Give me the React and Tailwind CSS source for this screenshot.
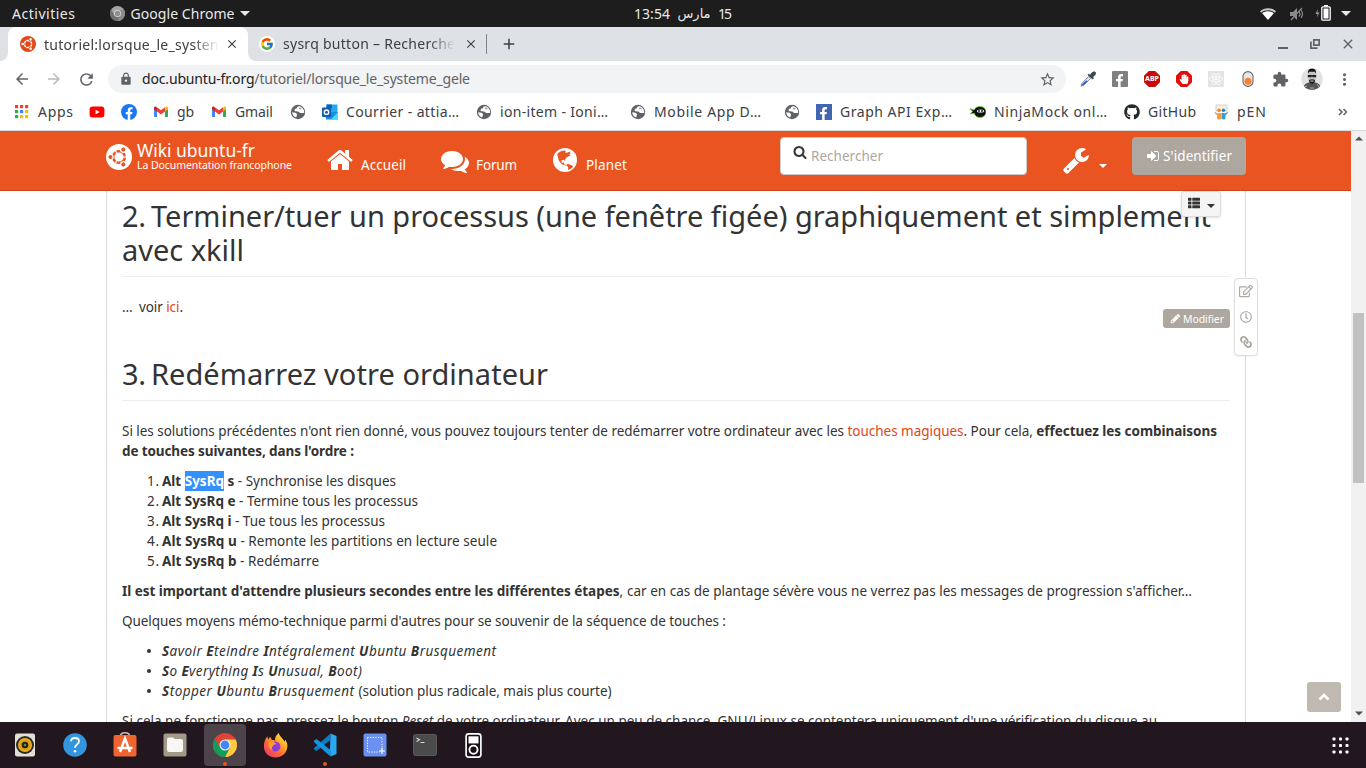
import React, { useLayoutEffect, useRef } from "react";
import { FaFacebookF, FaGithub, FaThList, FaRegClock, FaRegEdit, FaLink, FaReact, FaHandPaper } from "react-icons/fa";
import { MdArrowBack, MdArrowForward, MdRefresh, MdLock, MdStarBorder, MdExtension, MdMoreVert, MdAdd, MdClose } from "react-icons/md";
import { FcGoogle } from "react-icons/fc";

/* Spreads a single line of text over exactly `w` pixels through letter spacing. */
function Fit({ w, className = "", children }) {
  const ref = useRef(null);
  useLayoutEffect(() => {
    const el = ref.current;
    el.style.letterSpacing = "0px";
    const natural = el.getBoundingClientRect().width;
    const count = el.textContent.length;
    el.style.letterSpacing = `${(w - natural) / Math.max(1, count - 1)}px`;
  }, [w]);
  return (
    <span ref={ref} className={`inline-block shrink-0 whitespace-nowrap ${className}`}>
      {children}
    </span>
  );
}

function Glyph({ d, className }) {
  return (
    <svg viewBox="0 0 1792 1792" className={`shrink-0 fill-current ${className}`}>
      <path d={d} />
    </svg>
  );
}

const HOME = "M1472 992v480q0 26-19 45t-45 19h-384v-384h-256v384h-384q-26 0-45-19t-19-45v-480q0-1 .5-3t.5-3l575-474 575 474q1 2 1 6zm223-69l-62 74q-8 9-21 11h-3q-13 0-21-7l-692-577-692 577q-12 8-24 7-13-2-21-11l-62-74q-8-10-7-23.5t11-21.5l719-599q32-26 76-26t76 26l244 204v-195q0-14 9-23t23-9h192q14 0 23 9t9 23v408l219 182q10 8 11 21.5t-7 23.5z";
const COMMENTS = "M1408 768q0 139-94 257t-256.5 186.5-353.5 68.5q-86 0-176-16-124 88-278 128-36 9-86 16h-3q-11 0-20.5-8t-11.5-21q-1-3-1-6.5t.5-6.5 2-6l2.5-5 3.5-5.5 4-5 4.5-5 4-4.5q5-6 23-25t26-29.5 22.5-29 25-38.5 20.5-44q-124-72-195-177t-71-224q0-139 94-257t256.5-186.5 353.5-68.5 353.5 68.5 256.5 186.5 94 257zm384 256q0 120-71 224.5t-195 176.5q10 24 20.5 44t25 38.5 22.5 29 26 29.5 23 25q1 1 4 4.5t4.5 5 4 5 3.5 5.5l2.5 5 2 6 .5 6.5-1 6.5q-3 14-13 22t-22 7q-50-7-86-16-154-40-278-128-90 16-176 16-271 0-472-132 58 4 88 4 161 0 309-45t264-129q125-92 192-212t67-254q0-77-23-152 129 71 204 178t75 230z";
const SIGNIN = "M1312 896q0 26-19 45l-544 544q-19 19-45 19t-45-19-19-45v-288h-448q-26 0-45-19t-19-45v-384q0-26 19-45t45-19h448v-288q0-26 19-45t45-19 45 19l544 544q19 19 19 45zm352-352v704q0 119-84.5 203.5t-203.5 84.500h-320q-13 0-22.500-9.500t-9.500-22.500q0-4-1-20t-.5-26.500 3-23.500 10-19.500 20.500-6.500h320q66 0 113-47t47-113v-704q0-66-47-113t-113-47h-312l-11.500-1-11.500-3-8-5.500-7-9-2-13.500q0-4-1-20t-.5-26.500 3-23.500 10-19.500 20.500-6.500h320q119 0 203.500 84.500t84.500 203.500z";
const SEARCH = "M1216 832q0-185-131.5-316.5t-316.5-131.5-316.5 131.5-131.5 316.5 131.5 316.5 316.5 131.5 316.5-131.5 131.5-316.5zm512 832q0 52-38 90t-90 38q-54 0-90-38l-343-342q-179 124-399 124-143 0-273.5-55.5t-225-150-150-225-55.5-273.5 55.5-273.5 150-225 225-150 273.5-55.5 273.5 55.5 225 150 150 225 55.5 273.5q0 220-124 399l343 343q37 37 37 90z";
const WRENCH = "M448 1472q0-26-19-45t-45-19-45 19-19 45 19 45 45 19 45-19 19-45zm644-420l-682 682q-37 37-90 37-52 0-91-37l-106-108q-38-36-38-90 0-53 38-91l681-681q39 98 114.5 173.5t173.5 114.5zm634-435q0 39-23 106-47 134-164.5 217.5t-258.5 83.5q-185 0-316.5-131.5t-131.5-316.5 131.5-316.5 316.5-131.5q58 0 121.5 16.5t107.5 46.5q16 11 16 28t-16 28l-293 169v224l193 107q5-3 79-48.5t135.5-81 70.5-35.5q15 0 23.5 10t8.5 25z";
const PENCIL = "M491 1536l91-91-235-235-91 91v107h128v128h107zm523-928q0-22-22-22-10 0-17 7l-542 542q-7 7-7 17 0 22 22 22 10 0 17-7l542-542q7-7 7-17zm-54-192l416 416-832 832h-416v-416zm683 96q0 53-37 90l-166 166-416-416 166-165q36-38 90-38 53 0 91 38l235 234q37 39 37 91z";

function Caret({ className = "" }) {
  return (
    <svg viewBox="0 0 10 5" className={`shrink-0 fill-current ${className}`}>
      <path d="M0 0h10L5 5z" />
    </svg>
  );
}

function UbuntuLogo({ disc, mark, className }) {
  return (
    <svg viewBox="-12 -12 24 24" className={`shrink-0 ${className}`}>
      <circle r="12" fill={disc} />
      <circle r="5.4" fill="none" stroke={mark} strokeWidth="2.3" />
      {[0, 120, 240].map((a) => (
        <g key={a} transform={`rotate(${a})`}>
          <circle cx="-7.6" r="2.7" fill={disc} />
          <circle cx="-7.9" r="1.9" fill={mark} />
          <path d="M3 0h6" stroke={disc} strokeWidth="1.1" />
        </g>
      ))}
    </svg>
  );
}

function ChromeLogo({ mono = false, className }) {
  const [r, y, g, b] = mono ? ["#a5a5a5", "#8c8c8c", "#6f6f6f", "#8f8f8f"] : ["#db4437", "#ffcd40", "#0f9d58", "#4285f4"];
  return (
    <svg viewBox="0 0 48 48" className={`shrink-0 ${className}`}>
      <circle cx="24" cy="24" r="24" fill={r} />
      <path d="M24 13h21.3A24 24 0 0 1 24 48l9.5-18.5z" fill={y} />
      <path d="M3.2 12A24 24 0 0 0 24 48l9.5-18.5L24 35l-9.5-5.5z" fill={g} />
      <circle cx="24" cy="24" r="11" fill={mono ? "#e0e0e0" : "#f1f1f1"} />
      <circle cx="24" cy="24" r="8.8" fill={b} />
    </svg>
  );
}

function GmailLogo() {
  return (
    <svg viewBox="0 0 16 16" className="size-4">
      <path d="M1 4v8.3c0 .4.3.7.7.7H4V7z" fill="#4285f4" />
      <path d="M15 4v8.3c0 .4-.3.7-.7.7H12V7z" fill="#34a853" />
      <path d="M12 4v3.5l3-2.3V4c0-1.4-1.4-1.9-2.3-1.2z" fill="#fbbc04" />
      <path d="M1 4v1.2l3 2.3V4l-.7-1.2C2.4 2.1 1 2.6 1 4z" fill="#c5221f" />
      <path d="M4 7.5V3.300l4 3 4-3v4.200l-4 3z" fill="#ea4335" />
    </svg>
  );
}

function Globe() {
  return (
    <svg viewBox="0 0 16 16" className="size-4 shrink-0">
      <circle cx="8" cy="8" r="7.200" fill="#5f6368" />
      <path d="M9.800 2.200C8 2 6.800 2.800 7 4.200c-1.800.2-3 1.300-2.300 2.600.8 1.100 2.500.4 4 .9 1 .3.6 1.200 1.800 1.400 1 .1 1.600-.3 2.800-.1l1-.2C14.300 6 13 3.300 9.800 2.200z" fill="#fff" />
      <path d="M2.200 8.200c2.300.2 4.600.6 4.900 2.200.1 1-.8 1-.6 2 .1.700-.3 1-.9.9C3.700 12.400 2.300 10.700 2.200 8.200z" fill="#fff" />
      <path d="M9 3.700h2.500v1.600H9z" fill="#5f6368" opacity=".6" />
    </svg>
  );
}

function PlanetIcon({ className }) {
  return (
    <svg viewBox="0 0 24 24" className={`shrink-0 ${className}`}>
      <circle cx="12" cy="12" r="12" fill="#fff" />
      <path d="M4.200 6.200C6 4 8 2.800 10.500 2.400l2.500.6-1 1.500 2.400.3 1.600-1.300 1.800 1.700-1.600 1.200 1.400.8-3 1.500-2.400 2.300-.3 1.800-1.500-1-2 .8.300 2.200 1.600.2.600-.8.500 2.200 2 .9-1 .3L8.500 16 5.800 12.500 5 9z" fill="#e95420" />
      <path d="M13 16.800l2.300-.8 3.200 1.300 1.500 1.200c-1.300 1.700-3 2.900-5 3.400l.3-2.500z" fill="#e95420" />
    </svg>
  );
}

const bookmarks = [
  {
    label: "Apps", w: 35, box: "w-[35px]",
    icon: (
      <svg viewBox="0 0 16 16" className="size-4">
        {["#ea4335", "#ea4335", "#ea4335", "#34a853", "#4285f4", "#fbbc04", "#34a853", "#fbbc04", "#fbbc04"].map((c, i) => (
          <rect key={i} x={1 + (i % 3) * 5} y={1 + Math.floor(i / 3) * 5} width="3.2" height="3.2" fill={c} />
        ))}
      </svg>
    ),
  },
  {
    icon: (
      <svg viewBox="0 0 16 16" className="size-4">
        <rect x=".6" y="2.6" width="14.8" height="11" rx="3" fill="#f00" />
        <path d="M6.5 5.7v4.8L10.6 8.1z" fill="#fff" />
      </svg>
    ),
  },
  {
    icon: (
      <svg viewBox="0 0 24 24" className="size-4">
        <circle cx="12" cy="12" r="12" fill="#1877f2" />
        <path d="M16.7 15.5l.5-3.5h-3.3V9.800c0-.9.5-1.900 1.900-1.900h1.500V5s-1.400-.2-2.700-.2c-2.700 0-4.500 1.700-4.500 4.700V12h-3v3.500h3v8.400h3.800v-8.400z" fill="#fff" />
      </svg>
    ),
  },
  { label: "gb", w: 17, box: "w-[18px]", icon: <GmailLogo /> },
  { label: "Gmail", w: 38, box: "w-[39px]", icon: <GmailLogo /> },
  { icon: <Globe /> },
  {
    label: "Courrier - attia…", w: 113, box: "w-[114px]",
    icon: (
      <svg viewBox="0 0 16 16" className="size-4">
        <path d="M4.500.5h11v8h-11z" fill="#28a8ea" />
        <path d="M4.500.5H10v4H4.500z" fill="#0364b8" />
        <path d="M3 8h13v7.500H4z" fill="#1490df" />
        <path d="M16 8v7.500H9z" fill="#50d9ff" />
        <rect y="3.500" width="9" height="9.500" rx=".8" fill="#0f5fae" />
        <circle cx="4.500" cy="8.200" r="2.200" fill="none" stroke="#fff" strokeWidth="1.400" />
      </svg>
    ),
  },
  { label: "ion-item - Ioni…", w: 108, box: "w-[114px]", icon: <Globe /> },
  { label: "Mobile App D…", w: 107, box: "w-[114px]", icon: <Globe /> },
  { icon: <Globe /> },
  {
    label: "Graph API Exp…", w: 112, box: "w-[114px]",
    icon: (
      <span className="flex size-4 items-end justify-end bg-[#4267b2] pr-[2px]">
        <FaFacebookF className="size-[13px] text-white" />
      </span>
    ),
  },
  {
    label: "NinjaMock onl…", w: 113, box: "w-[114px]",
    icon: (
      <svg viewBox="0 0 16 16" className="size-4">
        <path d="M0 4.500l4 1.500C5 3.500 7.500 2.500 10 2.500c3.500 0 6 2.300 6 5.500s-2.500 5.500-6 5.500c-3 0-5.200-1.700-5.800-4.200L0 10l2.500-2.600z" fill="#111" stroke="#5fdc1e" strokeWidth=".8" />
        <ellipse cx="10.500" cy="7" rx="3.600" ry="1.600" fill="#fff" />
        <circle cx="9" cy="7" r=".9" fill="#111" />
        <circle cx="12" cy="7" r=".9" fill="#111" />
      </svg>
    ),
  },
  { label: "GitHub", w: 48, box: "w-[49px]", icon: <FaGithub className="size-4 text-[#24292e]" /> },
  {
    label: "pEN", w: 29, box: "w-[30px]",
    icon: (
      <svg viewBox="0 0 16 16" className="size-4">
        <rect x="3" y="1" width="11" height="6" fill="#fbf0e0" stroke="#b9b9b9" strokeWidth=".6" />
        <circle cx="6" cy="6.200" r="1.700" fill="#f5821f" />
        <circle cx="10.500" cy="6.200" r="1.700" fill="#1c87c9" />
        <path d="M1.500 7.500c2 2.500 4 1.500 6.500 1.500v6c-2 .8-4 .8-4-1V11C2.500 10.500 1.500 9 1.500 7.500z" fill="#f59a3f" />
        <path d="M15 7.500c-2 2.500-4 1.500-6.500 1.500v6c2 .8 4 .8 4-1V11c1.500-.5 2.500-2 2.500-3.500z" fill="#3a9ad6" />
      </svg>
    ),
  },
];

function TopBar() {
  return (
    <div className="flex h-[27px] shrink-0 items-center bg-[#1d1d1d] pl-3 text-[14px] text-[#e8e8e8]">
      <div className="flex w-[622px] items-center">
        <Fit w={63}>Activities</Fit>
        <ChromeLogo mono className="ml-[34px] size-[15px]" />
        <Fit w={104} className="ml-[6px]">Google Chrome</Fit>
        <Caret className="ml-[5px] h-[5px] w-[10px]" />
      </div>
      <div className="flex flex-1 items-center gap-[7px]">
        <Fit w={36}>13:54</Fit>
        <span className="w-[34px] text-center font-['DejaVu_Sans',sans-serif] text-[13px] whitespace-nowrap">مارس</span>
        <Fit w={14}>15</Fit>
      </div>
      <div className="flex items-center pr-[15px]">
        <svg viewBox="0 0 16 12" className="mr-px h-3 w-4">
          <path d="M0 3.300C4.500-.9 11.500-.9 16 3.300L14.800 4.700C11 1.500 5 1.500 1.200 4.700z" fill="#c9c9c9" />
          <path d="M2.200 5.200C5.500 2.700 10.500 2.700 13.800 5.200L8 12z" fill="#fff" />
        </svg>
        <svg viewBox="0 0 16 14" className="ml-[12px] h-[14px] w-4">
          <path d="M1 5h3l4-4v12L4 9H1z" fill="#8a8a8a" />
          <path d="M10 4.500q2 2.500 0 5M12 3q3 4 0 8M2 13L13 1" fill="none" stroke="#8a8a8a" strokeWidth="1.200" />
        </svg>
        <svg viewBox="0 0 16 16" className="ml-[10px] size-4 -translate-y-px">
          <path d="M3 4L.5 9h2L2 12.500 4.500 7.500h-2z" fill="#999" />
          <path d="M9 0h4v1.500H9z" fill="#fff" />
          <rect x="6.800" y="1.800" width="8.400" height="13.400" rx="1" fill="none" stroke="#fff" strokeWidth="1.300" />
          <rect x="8.500" y="3.500" width="5" height="10" fill="#fff" />
        </svg>
        <Caret className="ml-[10px] h-[5px] w-[10px]" />
      </div>
    </div>
  );
}

function TabStrip() {
  return (
    <div className="flex h-[34px] shrink-0 bg-[#dee1e6] text-[14px] text-[#3c4043]">
      <div className="flex w-2 items-end bg-white">
        <div className="h-full w-2 rounded-br-lg bg-[#dee1e6]" />
      </div>
      <div className="flex w-[240px] items-center bg-[#dee1e6]">
        <div className="flex h-full w-full items-center rounded-t-lg bg-white pl-3">
          <UbuntuLogo disc="#e04a1b" mark="#fff" className="size-4" />
          <div className="ml-2 w-[175px] overflow-hidden [mask-image:linear-gradient(to_right,black_85%,transparent)]">
            <Fit w={179}>tutoriel:lorsque_le_system</Fit>
          </div>
          <MdClose className="ml-[6px] size-[14px]" />
        </div>
      </div>
      <div className="bg-white">
        <div className="h-full w-2 rounded-bl-lg bg-[#dee1e6]" />
      </div>
      <div className="flex items-center pl-[3px]">
        <span className="flex size-4 items-center justify-center rounded-full bg-white">
          <FcGoogle className="size-[14px]" />
        </span>
        <div className="ml-2 w-[172px] overflow-hidden [mask-image:linear-gradient(to_right,black_85%,transparent)]">
          <Fit w={172} className="-translate-y-px">sysrq button – Recherche</Fit>
        </div>
        <MdClose className="ml-[9px] size-[14px]" />
        <div className="ml-2 h-5 w-px bg-[#808387]" />
        <MdAdd className="ml-[13px] size-[18px]" />
      </div>
      <div className="ml-auto flex items-center pr-[10px] text-[#5f6368]">
        <div className="mt-[7px] h-[2px] w-[10px] bg-[#5f6368]" />
        <svg viewBox="0 0 10 10" className="ml-[22px] size-[10px] fill-none stroke-current" strokeWidth="1.700">
          <path d="M3.800.9h5.300v5.300H3.800zM.9 2.500v6.600h6.600" />
        </svg>
        <MdClose className="ml-[20px] size-[16px]" />
      </div>
    </div>
  );
}

function Toolbar() {
  return (
    <div className="flex h-[36px] shrink-0 items-center bg-white pl-[13px] text-[#5f6368]">
      <MdArrowBack className="size-[18px] shrink-0" />
      <MdArrowForward className="ml-[14px] size-[18px] shrink-0 text-[#b9bbbe]" />
      <MdRefresh className="ml-[14px] size-[19px] shrink-0" />
      <div className="ml-[12px] flex h-7 w-[958px] shrink-0 items-center rounded-full bg-[#f1f3f4] pl-[11px] text-[14px]">
        <MdLock className="size-[14px] shrink-0" />
        <Fit w={328} className="ml-[9px] -translate-y-px">
          <span className="text-[#202124]">doc.ubuntu-fr.org</span>/tutoriel/lorsque_le_systeme_gele
        </Fit>
        <MdStarBorder className="mr-[10px] ml-auto size-[17px]" />
      </div>
      <div className="ml-[14px] flex items-center gap-4">
        <svg viewBox="0 0 16 16" className="size-4">
          <path d="M8.500 5.500l2 2L3.500 14.500 1 15.200 1.700 12.700z" fill="#dfe6fb" stroke="#777" strokeWidth=".8" />
          <path d="M6 9.500l2 .5-4.500 4.300-1.800.5.500-1.900z" fill="#2a62f0" />
          <path d="M7.500 4l1.200-1.200 1.300 1C11.500 1.500 13.500-.3 15.300 1s-.2 3.500-2.300 5l1 1.300L12.700 8.500z" fill="#3f464d" />
        </svg>
        <span className="flex size-4 items-end justify-end rounded-[1px] bg-[#808080] pr-[2px]">
          <FaFacebookF className="size-[13px] text-white" />
        </span>
        <span className="flex size-4 items-center justify-center bg-[#c70a0a] text-[7px] font-bold text-white [clip-path:polygon(30%_0,70%_0,100%_30%,100%_70%,70%_100%,30%_100%,0_70%,0_30%)]">ABP</span>
        <span className="flex size-4 items-center justify-center bg-[#e40d0d] [clip-path:polygon(30%_0,70%_0,100%_30%,100%_70%,70%_100%,30%_100%,0_70%,0_30%)]">
          <FaHandPaper className="size-[10px] text-white" />
        </span>
        <span className="flex size-4 items-center justify-center bg-[#e4e4e4]">
          <FaReact className="size-[14px] text-white" />
        </span>
        <svg viewBox="0 0 16 16" className="size-4">
          <rect x="3" y=".6" width="10" height="14.800" rx="5" fill="#e8e8e8" stroke="#666" strokeWidth="1.100" />
          <circle cx="8" cy="10.300" r="3.500" fill="#f5812a" />
        </svg>
        <MdExtension className="size-[17px]" />
      </div>
      <svg viewBox="0 0 22 22" className="ml-3 size-[22px]">
        <defs><clipPath id="avatar"><circle cx="11" cy="11" r="10.800" /></clipPath></defs>
        <g clipPath="url(#avatar)">
          <rect width="22" height="22" fill="#e2e2e2" />
          <path d="M2 22c0-5 3-7 6-7.500h6c4 .5 6 3 6 7.500z" fill="#555" />
          <path d="M3 19l3-1M16 16l2 3M9 20h4" stroke="#aaa" />
          <path d="M7.300 4h7.400v7c0 3.500-2 5-3.700 5s-3.700-1.500-3.700-5z" fill="#c4c4c4" />
          <path d="M7 6C6.500 1.500 9 .5 11 .5S15.500 1.500 15 6L14 3.800H8z" fill="#111" />
          <path d="M6.800 7h8.400v2.300h-3.500l-.7-1-.7 1H6.800zM8 12c2-1 4-1 6 0l-.5 3c-2 1.500-3 1.500-5 0z" fill="#222" />
          <path d="M9.500 13h3" stroke="#ccc" />
        </g>
      </svg>
      <MdMoreVert className="ml-[12px] size-[19px]" />
    </div>
  );
}

function Bookmarks() {
  return (
    <div className="flex h-[34px] shrink-0 items-center gap-4 border-b border-[#d5d8dc] bg-white pb-[3px] pl-[14px] text-[14px] text-[#3c4043]">
      {bookmarks.map((b, i) => (
        <div key={i} className="flex shrink-0 items-center gap-2">
          <span className="flex size-4 shrink-0 items-center justify-center">{b.icon}</span>
          {b.label && <span className={`${b.box} -translate-y-px`}><Fit w={b.w}>{b.label}</Fit></span>}
        </div>
      ))}
      <svg viewBox="0 0 10 8" className="mr-[18px] ml-auto h-2 w-[10px] fill-none stroke-[#5f6368]" strokeWidth="1.500">
        <path d="M1 1l3 3-3 3M5.500 1l3 3-3 3" />
      </svg>
    </div>
  );
}

function SiteHeader() {
  return (
    <header className="flex h-[60px] shrink-0 border-b border-[#d0451a] bg-[#e95420] pl-[106px] text-white">
      <UbuntuLogo disc="#fff" mark="#e95420" className="mt-[13px] size-[26px]" />
      <div className="ml-[5px] flex w-[189px] flex-col pt-[7px]">
        <Fit w={118} className="self-start text-[17.5px] leading-[24px]">Wiki ubuntu-fr</Fit>
        <Fit w={155} className="-mt-[4px] self-start text-[10.5px] leading-[15px]">La Documentation francophone</Fit>
      </div>
      <nav className="flex w-[454px] text-[13.5px] leading-5">
        <Glyph d={HOME} className="mt-[15px] size-[28px]" />
        <Fit w={45} className="mt-[24px] ml-[7px]">Accueil</Fit>
        <Glyph d={COMMENTS} className="mt-[16px] ml-[35px] size-[28px]" />
        <Fit w={41} className="mt-[24px] ml-[7px]">Forum</Fit>
        <PlanetIcon className="mt-[17px] ml-[36px] size-[24px]" />
        <Fit w={41} className="mt-[24px] ml-[9px]">Planet</Fit>
      </nav>
      <div className="mt-[6px] flex h-[38px] w-[247px] rounded border border-[#ccc] bg-white pl-[12px] text-[13.5px]">
        <Glyph d={SEARCH} className="mt-[7px] size-[14px] text-[#333]" />
        <Fit w={72} className="ml-[4px] leading-[36px] text-[#aea79f]">Rechercher</Fit>
      </div>
      <Glyph d={WRENCH} className="mt-[15px] ml-[35px] size-[28px]" />
      <Caret className="mt-[33px] ml-[9px] h-[4px] w-[8px]" />
      <button className="mt-[6px] ml-[25px] flex h-[38px] w-[114px] items-center rounded bg-[#aea79f] pl-[14px] text-[13.5px]">
        <Glyph d={SIGNIN} className="size-[14px]" />
        <Fit w={69} className="ml-[3px]">S'identifier</Fit>
      </button>
    </header>
  );
}

const steps = [
  ["s", "Synchronise les disques", 234],
  ["e", "Termine tous les processus", 256],
  ["i", "Tue tous les processus", 223],
  ["u", "Remonte les partitions en lecture seule", 335],
  ["b", "Redémarre", 157],
];

const Bullet = () => <span className="mr-[11px] size-[4px] rounded-full bg-[#333]" />;

function Article() {
  return (
    <article className="ml-[106px] h-[540px] w-[1140px] border-x border-[#ddd] px-[15px] text-[13.5px] leading-5 text-[#333]">
      <h2 className="h-[86px] border-b border-[#eee] pt-[8px] text-[29px] leading-[34px]">
        <span className="flex">
          <span className="w-[29px] shrink-0"><Fit w={24}>2.</Fit></span>
          <Fit w={1060}>Terminer/tuer un processus (une fenêtre figée) graphiquement et simplement</Fit>
        </span>
        <Fit w={122} className="h-[34px] align-top">avec xkill</Fit>
      </h2>
      <p className="mt-5 flex h-5">
        <span className="w-[17px] shrink-0 tracking-[1px]">…</span>
        <Fit w={44}>voir <a className="text-[#dd4814]">ici</a>.</Fit>
      </p>
      <div className="-mt-[17px] flex h-[29px] items-end justify-end">
        <button className="mb-px flex h-[19px] w-[67px] items-center rounded-[3px] bg-[#aea79f] pl-[7px] text-[10.5px] text-white">
          <Glyph d={PENCIL} className="size-[11px]" />
          <Fit w={41} className="ml-[2px]">Modifier</Fit>
        </button>
      </div>
      <h2 className="mt-[9px] flex h-[63px] border-b border-[#eee] pt-[19px] text-[29px] leading-[33px]">
        <span className="w-[29px] shrink-0"><Fit w={24}>3.</Fit></span>
        <Fit w={397}>Redémarrez votre ordinateur</Fit>
      </h2>
      <p className="mt-5 h-10">
        <Fit w={1095} className="h-5 align-top">
          Si les solutions précédentes n'ont rien donné, vous pouvez toujours tenter de redémarrer votre ordinateur avec les <a className="text-[#dd4814]">touches magiques</a>. Pour cela, <b>effectuez les combinaisons</b>
        </Fit>
        <Fit w={232} className="h-5 align-top font-bold">de touches suivantes, dans l'ordre :</Fit>
      </p>
      <ol className="mt-[10px] flex flex-col pl-[25px]">
        {steps.map(([key, text, w], i) => (
          <li key={key} className="flex h-5">
            <span className="w-[15px]"><Fit w={12}>{i + 1}.</Fit></span>
            <Fit w={w}>
              <b>Alt <span className={i === 0 ? "inline-block h-5 bg-[#3390ff] align-top text-white" : ""}>SysRq</span> {key}</b> - {text}
            </Fit>
          </li>
        ))}
      </ol>
      <p className="mt-[10px] flex h-5">
        <Fit w={501}><b>Il est important d'attendre plusieurs secondes entre les différentes étapes</b>,</Fit>
        <Fit w={565} className="ml-[4px]">car en cas de plantage sévère vous ne verrez pas les messages de progression s'afficher…</Fit>
      </p>
      <p className="mt-[10px] h-5"><Fit w={604}>Quelques moyens mémo-technique parmi d'autres pour se souvenir de la séquence de touches :</Fit></p>
      <ul className="mt-[10px] flex flex-col pl-[25px]">
        <li className="flex h-5 items-center"><Bullet /><Fit w={334} className="italic"><b>S</b>avoir <b>E</b>teindre <b>I</b>ntégralement <b>U</b>buntu <b>B</b>rusquement</Fit></li>
        <li className="flex h-5 items-center"><Bullet /><Fit w={200} className="italic"><b>S</b>o <b>E</b>verything <b>I</b>s <b>U</b>nusual, <b>B</b>oot)</Fit></li>
        <li className="flex h-5 items-center">
          <Bullet />
          <Fit w={192} className="italic"><b>S</b>topper <b>U</b>buntu <b>B</b>rusquement</Fit>
          <Fit w={253} className="ml-[4px]">(solution plus radicale, mais plus courte)</Fit>
        </li>
      </ul>
      <p className="mt-[10px] h-5">
        <Fit w={1035}>Si cela ne fonctionne pas, pressez le bouton <em>Reset</em> de votre ordinateur. Avec un peu de chance, GNU/Linux se contentera uniquement d'une vérification du disque au</Fit>
      </p>
    </article>
  );
}

const dock = [
  <svg viewBox="0 0 24 24" className="size-6">
    <rect x="2" y=".5" width="20" height="23" rx="2" fill="#e4dfd6" />
    <circle cx="12" cy="12" r="9" fill="#2b2b2b" /><circle cx="12" cy="12" r="7" fill="#f0b41c" /><circle cx="12" cy="12" r="5.800" fill="#e0a010" />
    <circle cx="12" cy="12" r="3.300" fill="#222" /><circle cx="12" cy="12" r="1.300" fill="#777" />
  </svg>,
  <svg viewBox="0 0 24 24" className="size-6">
    <circle cx="12" cy="12" r="11.800" fill="#3295dd" />
    <path d="M8 8.200C8.300 3.800 16 4 16 8.300c0 3-4 3.300-4 6.500" fill="none" stroke="#fff" strokeWidth="1.800" /><circle cx="12" cy="18.200" r="1.300" fill="#fff" />
  </svg>,
  <svg viewBox="0 0 24 26" className="mb-[2px] h-[26px] w-6">
    <path d="M7.500 5C7.500.5 16.500.5 16.500 5" fill="none" stroke="#d8b99b" strokeWidth="1.500" />
    <rect x=".5" y="4" width="23" height="21.500" rx="2" fill="#f0652f" />
    <path d="M7 21L12 7.500 17 21M4.500 17h15" fill="none" stroke="#fff" strokeWidth="2.500" />
  </svg>,
  <svg viewBox="0 0 24 24" className="size-6">
    <rect x=".5" y=".5" width="23" height="23" rx="2" fill="#a39a87" />
    <path d="M4 6.500q0-2 2-2h4q1 0 1.500 1.500H18q2 0 2 2V17q0 2-2 2H6q-2 0-2-2z" fill="#f8f7f4" />
  </svg>,
  <ChromeLogo className="size-6" />,
  <svg viewBox="0 0 26 26" className="size-[25px]">
    <defs>
      <linearGradient id="flame" x1="1" y1="0" x2=".2" y2="1">
        <stop offset="0" stopColor="#fff44f" /><stop offset=".35" stopColor="#ffb52a" /><stop offset=".65" stopColor="#ff6a35" /><stop offset="1" stopColor="#ef3a6c" />
      </linearGradient>
      <linearGradient id="core" x1="0" y1="1" x2="1" y2="0">
        <stop offset="0" stopColor="#7340dd" /><stop offset="1" stopColor="#a63ad8" />
      </linearGradient>
    </defs>
    <path d="M1 14C1 9 2.500 6 4.500 3.500l.8 3.200L7.500 4l1.800 3.400c1.500-.4 2.500 0 3.500.6C12 4.500 14 2 16.500 0c.3 3.500 4.500 5.200 5.700 9l1-2c2 3 2.300 5 2.100 7C25 21 19.500 25.500 13 25.500S1 21 1 14z" fill="url(#flame)" />
    <circle cx="13" cy="14" r="5.200" fill="url(#core)" />
    <path d="M5.500 9.500C8.500 8 11.500 9 14 11.500c-2 .3-3.300.8-4 2.500-.8 1-1.500 2 .5 4C7 17.500 5 13.500 5.500 9.500z" fill="#ff9a2e" />
  </svg>,
  <svg viewBox="0 0 24 24" className="size-6">
    <path d="M17.500.5L23.500 3v18l-6 2.500L17 17z" fill="#29a9f2" />
    <path d="M17.500.5V7L3.500 18 1 16.300V15z" fill="#0d7ac4" />
    <path d="M17.500 23.500V17L3.500 6 1 7.700V9z" fill="#1595e0" />
  </svg>,
  <svg viewBox="0 0 24 24" className="size-6">
    <rect x=".5" y=".5" width="23" height="23" rx="2" fill="#6a91f0" />
    <path d="M4.500 4.500h14.500v12M4.500 4.500v14.500h12" fill="none" stroke="#fff" strokeDasharray="1.200 1.400" /><path d="M19 15v6M16 18h6" stroke="#fff" strokeWidth="1.200" />
  </svg>,
  <svg viewBox="0 0 24 24" className="size-6">
    <rect x=".5" y="1.500" width="23" height="21" rx="2" fill="#4b4b4b" stroke="#5a5a5a" />
    <path d="M3.500 5l3 1.800-3 1.800M7.500 9.500h4" fill="none" stroke="#ddd" strokeWidth="1.100" />
  </svg>,
  <svg viewBox="0 0 16 24" className="mr-[3px] h-[25px] w-[17px]">
    <rect x=".9" y=".9" width="14.200" height="22.200" rx="2.500" fill="#181018" stroke="#fff" strokeWidth="1.600" />
    <rect x="3.200" y="3.200" width="9.600" height="6.800" fill="#fff" /><circle cx="8" cy="16" r="3.900" fill="none" stroke="#fff" strokeWidth="1.800" />
  </svg>,
];

function Dock() {
  return (
    <div className="flex h-[46px] shrink-0 items-center bg-[#22161f]">
      {dock.map((icon, i) => (
        <div key={i} className="flex w-[50px] justify-center">
          <div className={`relative flex size-[42px] items-center justify-center rounded ${i === 4 ? "bg-[#4d434a]" : ""}`}>
            {icon}
            {(i === 4 || i === 6) && <span className="absolute bottom-0 left-[19px] size-1 rounded-full bg-[#e95420]" />}
          </div>
        </div>
      ))}
      <svg viewBox="0 0 17 17" className="mr-[17px] ml-auto size-[17px] fill-white">
        {[0, 1, 2].flatMap((r) => [0, 1, 2].map((c) => <rect key={`${r}${c}`} x={0.5 + c * 6.5} y={0.5 + r * 6.5} width="3" height="3" rx=".8" />))}
      </svg>
    </div>
  );
}

export default function App() {
  return (
    <div className="flex h-[768px] w-[1366px] flex-col overflow-hidden bg-white font-['Noto_Sans','DejaVu_Sans',sans-serif]">
      <TopBar />
      <TabStrip />
      <Toolbar />
      <Bookmarks />
      <div className="flex h-[591px] shrink-0 overflow-hidden">
        <main className="relative flex w-[1351px] flex-col overflow-hidden">
          <SiteHeader />
          <Article />
          <div className="absolute top-[60px] left-[1181px] flex h-[26px] w-[40px] rounded-[3px] border border-[#ddd] bg-[#f5f5f5] pl-[6px] text-[#333] shadow-sm">
            <FaThList className="mt-[5px] size-[12px]" />
            <Caret className="mt-[12px] ml-[7px] h-[4px] w-[8px]" />
          </div>
          <div className="absolute top-[147px] left-[1234px] flex h-[78px] w-[24px] flex-col items-center justify-between rounded border border-[#ddd] bg-white pt-[5px] pr-px pb-[7px] text-[#aea79f] shadow-xs">
            <FaRegEdit className="size-[14px]" />
            <FaRegClock className="size-[12px]" />
            <FaLink className="size-[12px] -scale-x-100" />
          </div>
          <button className="absolute top-[551px] left-[1307px] flex h-[30px] w-[34px] items-center justify-center rounded-[3px] bg-[#bfb9b2]">
            <svg viewBox="0 0 12 8" className="h-2 w-3 fill-none stroke-white" strokeWidth="2.600"><path d="M1.500 6.500L6 2l4.500 4.500" /></svg>
          </button>
        </main>
        <div className="flex w-[15px] flex-col items-center bg-[#f1f1f1] text-[#505050]">
          <Caret className="mt-[5px] h-[5px] w-[8px] rotate-180" />
          <div className="mt-[172px] h-[170px] w-[11px] bg-[#c1c1c1]" />
          <Caret className="mt-auto mb-[6px] h-[5px] w-[8px]" />
        </div>
      </div>
      <Dock />
    </div>
  );
}
